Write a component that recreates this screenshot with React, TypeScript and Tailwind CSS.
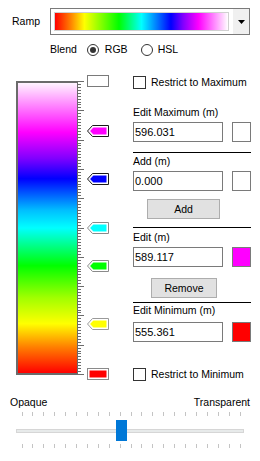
import React from 'react';

const FONT = { fontFamily: '"Liberation Sans", Arial, sans-serif' };

// marker tops are measured from the top of the ramp section
const markers = [
  { y: 0, color: '#ffffff', edge: '#7a7a7a', pointed: false, plain: true },
  { y: 50, color: '#ff00ff', edge: '#1a1a1a', pointed: true },
  { y: 98, color: '#0000ff', edge: '#1a1a1a', pointed: true },
  { y: 147, color: '#00ffff', edge: '#8a8a8a', pointed: true },
  { y: 185, color: '#00ff00', edge: '#8a8a8a', pointed: true },
  { y: 243, color: '#ffff00', edge: '#9a9a9a', pointed: true },
  { y: 293, color: '#ff0000', edge: '#8a8a8a', pointed: false },
];

function Marker({ color, edge, pointed, plain }: { color: string; edge: string; pointed: boolean; plain?: boolean }) {
  if (plain) {
    return (
      <svg width="22" height="12" viewBox="0 0 22 12">
        <rect x="0.5" y="0.5" width="21" height="11" fill="#fff" stroke={edge} />
      </svg>
    );
  }
  if (!pointed) {
    return (
      <svg width="22" height="12" viewBox="0 0 22 12">
        <rect x="0.5" y="0.5" width="21" height="11" fill="#fff" stroke={edge} />
        <rect x="2" y="2" width="18" height="8" fill={color} stroke="#fff" />
      </svg>
    );
  }
  return (
    <svg width="22" height="12" viewBox="0 0 22 12">
      <path d="M0.5 6 L5.5 0.5 H21.5 V11.5 H5.5 Z" fill="#fff" stroke={edge} />
      <path d="M2.5 6 L6.3 2 H20 V10 H6.3 Z" fill={color} stroke="#fff" />
    </svg>
  );
}

function Ruler() {
  const ticks = Array.from({ length: 101 }, (_, i) => i);
  return (
    <svg width="8" height="294" viewBox="0 0 8 294" className="block">
      <line x1="0.5" y1="0" x2="0.5" y2="294" stroke="#6b6b6b" />
      {ticks.map((i) => {
        const y = Math.round(i * 2.93) + 0.5;
        const long = i % 10 === 0;
        return <line key={i} x1="0" y1={y} x2={long ? 7 : 4} y2={y} stroke="#6b6b6b" />;
      })}
    </svg>
  );
}

function Checkbox({ label }: { label: string }) {
  return (
    <div className="flex items-center h-[13px]">
      <div className="w-[13px] h-[13px] border border-[#333] bg-white" />
      <span className="ml-[5px] text-[10.5px] leading-[13px] text-black">{label}</span>
    </div>
  );
}

function Field({ value, swatch }: { value: string; swatch: string }) {
  return (
    <div className="flex items-center h-[20px]">
      <div className="w-[90px] h-[20px] border border-[#7a7a7a] bg-white px-[1px] text-[11px] leading-[18px] text-black">
        {value}
      </div>
      <div className="ml-auto w-[19px] h-[20px] border border-[#7a7a7a]" style={{ background: swatch }} />
    </div>
  );
}

function Radio({ checked }: { checked: boolean }) {
  return (
    <div className="w-[12px] h-[12px] rounded-full border border-[#333] bg-white flex items-center justify-center">
      {checked && <div className="w-[6px] h-[6px] rounded-full bg-[#333]" />}
    </div>
  );
}

export default function App() {
  const trackTicks = Array.from({ length: 21 }, (_, i) => i);
  return (
    <div className="w-[260px] h-[461px] bg-white overflow-hidden text-black" style={FONT}>
      {/* Ramp */}
      <div className="flex items-center pt-[8px]">
        <span className="ml-[12px] w-[38px] text-[10.5px]">Ramp</span>
        <div className="w-[200px] h-[27px] border border-[#7a7a7a] flex items-center bg-white">
          <div className="ml-[3px] w-[175px] h-[19px] border border-[#d0d0d0] bg-[linear-gradient(to_right,#ff0000_0%,#ff8000_9%,#ffff00_17%,#80ff00_27%,#00ff00_37%,#00ffff_50%,#0000ff_67%,#8000ff_74%,#ff00ff_83%,#ffffff_100%)]" />
          <div className="ml-auto w-[16px] h-[25px] bg-[#f0f0f0] flex items-center justify-center">
            <svg width="7" height="4" viewBox="0 0 7 4">
              <path d="M0 0 H7 L3.5 4 Z" fill="#000" />
            </svg>
          </div>
        </div>
      </div>

      {/* Blend */}
      <div className="flex items-center mt-[8px] h-[14px] text-[10.5px]">
        <span className="ml-[50px]">Blend</span>
        <div className="ml-[10px]"><Radio checked /></div>
        <span className="ml-[6px]">RGB</span>
        <div className="ml-[13px]"><Radio checked={false} /></div>
        <span className="ml-[5px]">HSL</span>
      </div>

      {/* Main */}
      <div className="flex mt-[18px] h-[306px]">
        <div className="relative w-[133px] shrink-0">
          <div className="flex mt-[6px] ml-[16px]">
            <div className="w-[61px] h-[294px] border-2 border-r-0 border-[#6b6b6b] bg-[linear-gradient(to_bottom,#fff4ff_0%,#ff00ff_17%,#8000ff_26%,#0000ff_33%,#00c0ff_44%,#00ffff_50%,#00ff00_63%,#a0ff00_74%,#ffff00_83%,#ff8000_91%,#ff0000_100%)]" />
            <Ruler />
          </div>
          {markers.map((m, i) => (
            <div key={i} className="absolute left-[87px]" style={{ top: m.y }}>
              <Marker color={m.color} edge={m.edge} pointed={m.pointed} plain={m.plain} />
            </div>
          ))}
        </div>

        <div className="w-[118px] flex flex-col text-[10.5px]">
          <div className="mt-[1px]"><Checkbox label="Restrict to Maximum" /></div>
          <div className="mt-[17px] leading-[13px]">Edit Maximum (m)</div>
          <div className="mt-[3px]"><Field value="596.031" swatch="#ffffff" /></div>
          <div className="mt-[10px] h-px bg-black" />
          <div className="mt-[2px] leading-[13px]">Add (m)</div>
          <div className="mt-[3px]"><Field value="0.000" swatch="#ffffff" /></div>
          <button className="mt-[8px] ml-[14px] w-[73px] h-[20px] bg-[#e1e1e1] border border-[#adadad] text-[10.5px] leading-[18px]">
            Add
          </button>
          <div className="mt-[8px] h-px bg-black" />
          <div className="mt-[3px] leading-[13px]">Edit (m)</div>
          <div className="mt-[3px]"><Field value="589.117" swatch="#ff00ff" /></div>
          <button className="mt-[11px] ml-[18px] w-[66px] h-[20px] bg-[#e1e1e1] border border-[#adadad] text-[10.5px] leading-[18px]">
            Remove
          </button>
          <div className="mt-[4px] h-px bg-black" />
          <div className="mt-[1px] leading-[13px]">Edit Minimum (m)</div>
          <div className="mt-[5px]"><Field value="555.361" swatch="#ff0000" /></div>
          <div className="mt-[26px]"><Checkbox label="Restrict to Minimum" /></div>
        </div>
      </div>

      {/* Opacity */}
      <div className="flex justify-between mx-[10px] mt-[15px] text-[10.5px] leading-[13px]">
        <span>Opaque</span>
        <span>Transparent</span>
      </div>
      <div className="relative mx-[16px] mt-[3px] h-[40px]">
        <svg width="228" height="40" viewBox="0 0 228 40" className="absolute left-0 top-0">
          {trackTicks.map((i) => {
            const x = Math.round(5.5 + i * 10.9) + 0.5;
            return (
              <g key={i}>
                <line x1={x} y1="0" x2={x} y2="4" stroke="#c4c4c4" />
                <line x1={x} y1="32" x2={x} y2="36" stroke="#c4c4c4" />
              </g>
            );
          })}
        </svg>
        <div className="absolute left-0 top-[17px] w-[228px] h-[4px] bg-[#e7eaea] border border-[#d6d6d6]" />
        <div className="absolute left-[100px] top-[8px] w-[11px] h-[21px] bg-[#0078d7]" />
      </div>
    </div>
  );
}
